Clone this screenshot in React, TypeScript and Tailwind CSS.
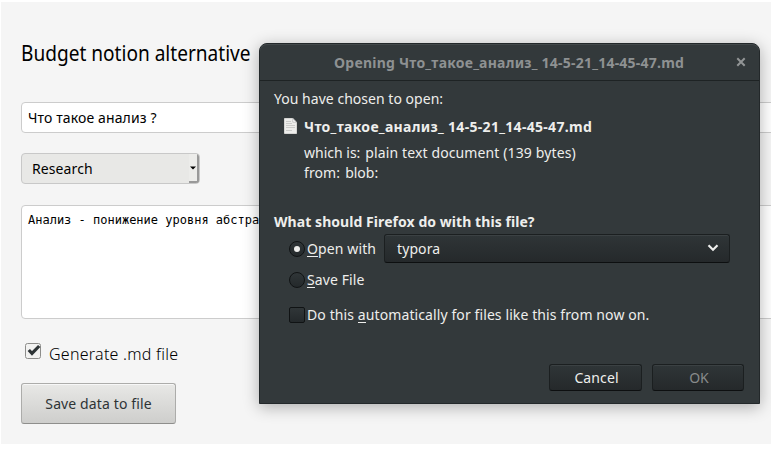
import type { ReactNode } from "react";

function Line({ className = "", children }: { className?: string; children: ReactNode }) {
  return <span className={`inline-block origin-left whitespace-pre ${className}`}>{children}</span>;
}

function NotionForm() {
  return (
    <main className="ml-px mt-[2px] h-[442px] w-[770px] overflow-hidden bg-[#f5f5f5] pl-5">
      <h1 className="h-[100px] pt-[35px] text-[22px] leading-[30px]">
        <Line className="scale-x-[0.867]">Budget notion alternative</Line>
      </h1>
      <div className="flex h-[31px] w-[900px] items-center rounded-[4px] border border-[#ccc] bg-white pl-[6px] text-[14px]">
        <Line className="tracking-[0.12px]">Что такое анализ ?</Line>
      </div>
      <div className="mt-5 flex h-[31px] w-[179px] items-stretch justify-between overflow-hidden rounded-[4px] border border-[#c8c8c8] bg-[#e8e8e6] pl-[10px] text-[14px]">
        <div className="flex items-center">
          <Line className="tracking-[0.1px]">Research</Line>
        </div>
        <div className="flex w-[10px] items-center justify-center border-b-2 border-r-2 border-[#999] bg-[#ececea]">
          <svg width="6" height="4" viewBox="0 0 6 4">
            <path d="M0 0.5h6L3 3.5z" fill="#000" />
          </svg>
        </div>
      </div>
      <div className="mt-[21px] h-[114px] w-[900px] rounded-[4px] border border-[#ccc] bg-white pl-[6px] pt-[4px] font-['DejaVu_Sans_Mono',monospace] text-[12px] leading-[20px]">
        <Line>Анализ - понижение уровня абстракции</Line>
      </div>
      <div className="mt-[24px] flex h-[20px] items-start pl-[4px]">
        <svg width="16" height="16" viewBox="0 0 16 16">
          <rect x="0.5" y="0.5" width="15" height="15" rx="2" fill="#f2f2f1" stroke="#8d8d8b" />
          <path d="M3.8 7l3.2 3.4 7.2-7.400" fill="none" stroke="#2e3436" strokeWidth="3.2" />
        </svg>
        <div className="ml-[8px] text-[16px] leading-[22px]">
          <Line className="font-light tracking-[0.26px]">Generate .md file</Line>
        </div>
      </div>
      <div className="mt-[20px] flex h-[41px] w-[155px] items-center justify-center rounded-[3px] border border-[#acacaa] border-b-[#8e8e8c] bg-linear-to-b from-[#e8e8e6] to-[#cececc] text-[14px] text-[#2e3436] shadow-[inset_0_1px_0_#f7f7f7]">
        <Line className="tracking-[0.12px]">Save data to file</Line>
      </div>
    </main>
  );
}

function Radio({ checked = false }: { checked?: boolean }) {
  return (
    <span className="-mt-px flex h-[16px] w-[16px] shrink-0 items-center justify-center rounded-full border border-[#101314] bg-linear-to-b from-[#303638] to-[#24292b]">
      {checked && <span className="h-[6px] w-[6px] rounded-full bg-[#eeeeec]" />}
    </span>
  );
}

function Key({ children }: { children: ReactNode }) {
  return <span className="inline-block h-[17px] border-b border-[#eeeeec] leading-[17px]">{children}</span>;
}

function OpenDialog() {
  return (
    <section className="absolute left-[259px] top-[43px] h-[361px] w-[501px] rounded-t-[8px] border border-[#23282a] bg-[#33393b] text-[14px] text-[#eeeeec] shadow-[0_3px_16px_rgba(0,0,0,0.3)]">
      <header className="flex h-[37px] items-center rounded-t-[7px] border-b border-[#1e2324] pl-[74px] font-bold text-[#8e9192] shadow-[inset_0_1px_0_#43494b]">
        <div className="w-[402px]">
          <Line className="tracking-[0.23px]">Opening Что_такое_анализ_ 14-5-21_14-45-47.md</Line>
        </div>
        <svg width="10" height="10" viewBox="0 0 10 10">
          <path d="M1.3 1.3l7.4 7.4M8.7 1.3L1.3 8.7" stroke="#929596" strokeWidth="2" />
        </svg>
      </header>
      <div className="pl-[14px] pt-[8px] leading-[20px]">
        <div className="h-[27px]">
          <Line className="tracking-[0.03px]">You have chosen to open:</Line>
        </div>
        <div className="flex h-[27px] items-start pl-[10px]">
          <svg className="mt-[2px]" width="13" height="16" viewBox="0 0 13 16">
            <path d="M0.5 0.5h8.3l3.7 3.7v11.3h-12z" fill="#ededeb" stroke="#d5d5d3" />
            <path d="M8.8 0.5v3.7h3.7z" fill="#fff" stroke="#aaa" strokeWidth="0.6" />
            <path d="M2 3.5h5M2 5.5h6M2 7.5h9M2 9.5h9M2 12.5h6" stroke="#cbcbc9" />
          </svg>
          <b className="ml-[7px] mt-px">
            <Line className="tracking-[0.31px]">Что_такое_анализ_ 14-5-21_14-45-47.md</Line>
          </b>
        </div>
        <div className="flex h-[20px] gap-[5px] pl-[30px]">
          <Line>which is:</Line>
          <Line className="tracking-[0.12px]">plain text document (139 bytes)</Line>
        </div>
        <div className="flex h-[49px] gap-[5px] pl-[30px]">
          <Line className="tracking-[0.1px]">from:</Line>
          <Line>blob:</Line>
        </div>
        <b className="block h-[22px]">
          <Line className="tracking-[0.06px]">What should Firefox do with this file?</Line>
        </b>
        <div className="flex h-[30px] items-center pl-[15px]">
          <Radio checked />
          <div className="ml-[2px] w-[77px]">
            <Line className="tracking-[0.12px]"><Key>O</Key>pen with</Line>
          </div>
          <div className="-mt-px flex h-[29px] w-[346px] items-center justify-between rounded-[3px] border border-[#1b1f20] border-b-[#0d0f10] bg-linear-to-b from-[#2f3537] to-[#25292b] pl-[12px] pr-[10px] shadow-[inset_0_1px_0_#3b4143]">
            <Line className="tracking-[0.1px]">typora</Line>
            <svg className="-mt-px" width="12" height="8" viewBox="0 0 12 8">
              <path d="M1.5 1.3L6 5.7l4.500-4.400" fill="none" stroke="#eeeeec" strokeWidth="2.2" />
            </svg>
          </div>
        </div>
        <div className="mt-[1px] flex h-[30px] items-center pl-[15px]">
          <Radio />
          <div className="ml-[2px]">
            <Line className="tracking-[0.1px]"><Key>S</Key>ave File</Line>
          </div>
        </div>
        <div className="mt-[4px] flex h-[32px] items-center pl-[15px]">
          <span className="-mt-px h-[16px] w-[16px] rounded-[2px] border border-[#101314] bg-linear-to-b from-[#303638] to-[#24292b]" />
          <div className="ml-[2px]">
            <Line className="tracking-[0.1px]">Do this <Key>a</Key>utomatically for files like this from now on.</Line>
          </div>
        </div>
      </div>
      <footer className="mt-[33px] flex justify-end gap-[10px] pr-[15px]">
        <div className="flex h-[27px] w-[93px] items-center justify-center rounded-[3px] border border-[#1b1f20] border-b-[#0d0f10] bg-linear-to-b from-[#2f3537] to-[#25292b] pl-[2px] shadow-[inset_0_1px_0_#3b4143]">
          <Line className="tracking-[0.1px]">Cancel</Line>
        </div>
        <div className="flex h-[27px] w-[92px] items-center justify-center rounded-[3px] border border-[#1b1f20] border-b-[#0d0f10] bg-linear-to-b from-[#2f3537] to-[#25292b] pl-[2px] text-[#888b8b] shadow-[inset_0_1px_0_#3b4143]">
          <Line>OK</Line>
        </div>
      </footer>
    </section>
  );
}

export default function App() {
  return (
    <div className="relative flow-root h-[457px] w-[771px] overflow-hidden bg-white font-['Noto_Sans','Open_Sans',sans-serif] text-black">
      <NotionForm />
      <OpenDialog />
    </div>
  );
}
